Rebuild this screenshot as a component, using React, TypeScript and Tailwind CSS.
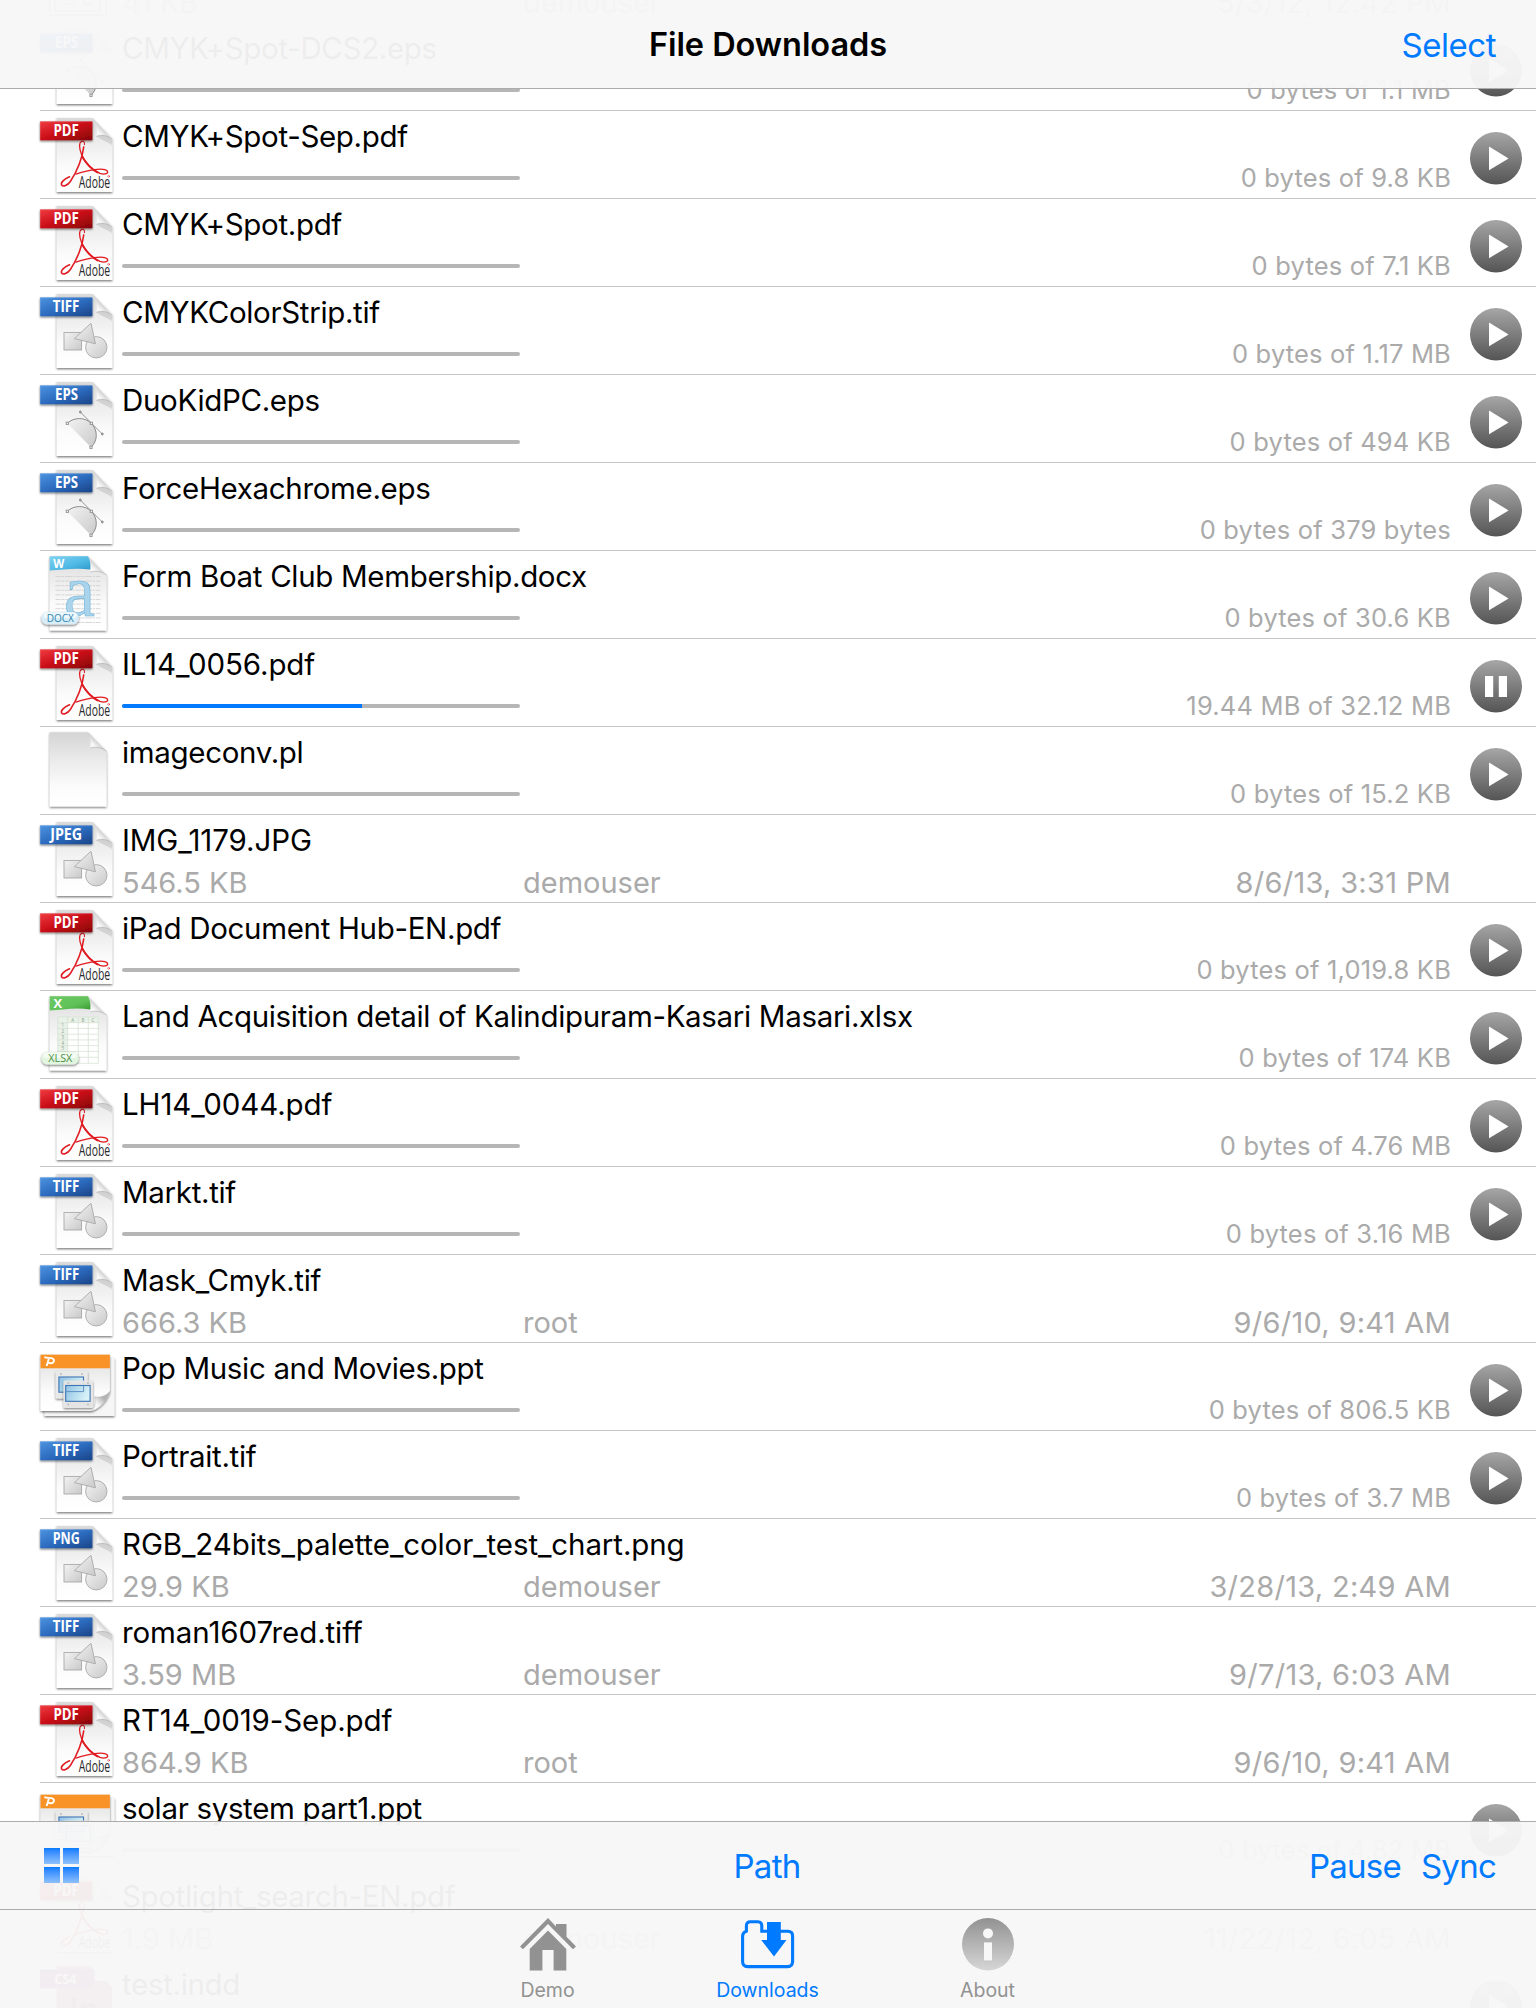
import type { ReactNode } from "react";

type Kind = "pdf" | "tiff" | "eps" | "jpeg" | "png" | "docx" | "xlsx" | "ppt" | "blank" | "indd" | "frame";

type FileRow = {
  name: string;
  kind: Kind;
  size?: string;
  owner?: string;
  date?: string;
  status?: string;
  progress?: number;
};

const files: FileRow[] = [
  { name: "CMYK+Spot-DCS.pict", kind: "frame", size: "41 KB", owner: "demouser", date: "5/3/12, 12:42 PM" },
  { name: "CMYK+Spot-DCS2.eps", kind: "eps", status: "0 bytes of 1.1 MB" },
  { name: "CMYK+Spot-Sep.pdf", kind: "pdf", status: "0 bytes of 9.8 KB" },
  { name: "CMYK+Spot.pdf", kind: "pdf", status: "0 bytes of 7.1 KB" },
  { name: "CMYKColorStrip.tif", kind: "tiff", status: "0 bytes of 1.17 MB" },
  { name: "DuoKidPC.eps", kind: "eps", status: "0 bytes of 494 KB" },
  { name: "ForceHexachrome.eps", kind: "eps", status: "0 bytes of 379 bytes" },
  { name: "Form Boat Club Membership.docx", kind: "docx", status: "0 bytes of 30.6 KB" },
  { name: "IL14_0056.pdf", kind: "pdf", status: "19.44 MB of 32.12 MB", progress: 60.3 },
  { name: "imageconv.pl", kind: "blank", status: "0 bytes of 15.2 KB" },
  { name: "IMG_1179.JPG", kind: "jpeg", size: "546.5 KB", owner: "demouser", date: "8/6/13, 3:31 PM" },
  { name: "iPad Document Hub-EN.pdf", kind: "pdf", status: "0 bytes of 1,019.8 KB" },
  { name: "Land Acquisition detail of Kalindipuram-Kasari Masari.xlsx", kind: "xlsx", status: "0 bytes of 174 KB" },
  { name: "LH14_0044.pdf", kind: "pdf", status: "0 bytes of 4.76 MB" },
  { name: "Markt.tif", kind: "tiff", status: "0 bytes of 3.16 MB" },
  { name: "Mask_Cmyk.tif", kind: "tiff", size: "666.3 KB", owner: "root", date: "9/6/10, 9:41 AM" },
  { name: "Pop Music and Movies.ppt", kind: "ppt", status: "0 bytes of 806.5 KB" },
  { name: "Portrait.tif", kind: "tiff", status: "0 bytes of 3.7 MB" },
  { name: "RGB_24bits_palette_color_test_chart.png", kind: "png", size: "29.9 KB", owner: "demouser", date: "3/28/13, 2:49 AM" },
  { name: "roman1607red.tiff", kind: "tiff", size: "3.59 MB", owner: "demouser", date: "9/7/13, 6:03 AM" },
  { name: "RT14_0019-Sep.pdf", kind: "pdf", size: "864.9 KB", owner: "root", date: "9/6/10, 9:41 AM" },
  { name: "solar system part1.ppt", kind: "ppt", status: "0 bytes of 4.82 MB" },
  { name: "Spotlight_search-EN.pdf", kind: "pdf", size: "1.9 MB", owner: "demouser", date: "11/22/12, 6:05 AM" },
  { name: "test.indd", kind: "indd", status: "0 bytes of 2.3 MB" },
];

// gradients shared by every icon, mounted once
function IconDefs() {
  return (
    <svg className="absolute h-0 w-0" aria-hidden="true">
      <defs>
        <linearGradient id="paper" x1="0" y1="0" x2="0" y2="1">
          <stop offset="0" stopColor="#d9d9d9" />
          <stop offset=".25" stopColor="#e9e9e9" />
          <stop offset=".65" stopColor="#fbfbfb" />
          <stop offset="1" stopColor="#fff" />
        </linearGradient>
        <linearGradient id="blank" x1="0" y1="0" x2="0" y2="1">
          <stop offset="0" stopColor="#d4d4d4" />
          <stop offset=".4" stopColor="#ececec" />
          <stop offset=".75" stopColor="#fcfcfc" />
          <stop offset="1" stopColor="#fff" />
        </linearGradient>
        <linearGradient id="fold" x1="0.1" y1="0.95" x2="0.65" y2="0.35">
          <stop offset="0" stopColor="#fff" />
          <stop offset=".45" stopColor="#f6f6f6" />
          <stop offset="1" stopColor="#b4b4b4" />
        </linearGradient>
        <linearGradient id="blue" x1="0" y1="0" x2="1" y2="1">
          <stop offset="0" stopColor="#4c93e0" />
          <stop offset=".5" stopColor="#2d6cc0" />
          <stop offset="1" stopColor="#1a4488" />
        </linearGradient>
        <linearGradient id="red" x1="0" y1="0" x2="1" y2="1">
          <stop offset="0" stopColor="#f03c40" />
          <stop offset=".5" stopColor="#c90d17" />
          <stop offset="1" stopColor="#850408" />
        </linearGradient>
        <linearGradient id="shape" x1="0" y1="0" x2="1" y2="1">
          <stop offset="0" stopColor="#f3f3f3" />
          <stop offset="1" stopColor="#c9c9c9" />
        </linearGradient>
        <linearGradient id="wordTop" x1="0" y1="0" x2="1" y2="1">
          <stop offset="0" stopColor="#7fd3f2" />
          <stop offset=".6" stopColor="#4db8e4" />
          <stop offset="1" stopColor="#2b96c8" />
        </linearGradient>
        <linearGradient id="excelTop" x1="0" y1="0" x2="1" y2="1">
          <stop offset="0" stopColor="#6cc964" />
          <stop offset=".6" stopColor="#5fc257" />
          <stop offset="1" stopColor="#37962f" />
        </linearGradient>
        <linearGradient id="slide" x1="0" y1="0" x2="1" y2="0.3">
          <stop offset="0" stopColor="#8fc0e4" />
          <stop offset=".5" stopColor="#b5dcee" />
          <stop offset="1" stopColor="#d8f1f8" />
        </linearGradient>
        <linearGradient id="button" x1="0" y1="0" x2="0" y2="1">
          <stop offset="0" stopColor="#a6a6a6" />
          <stop offset="1" stopColor="#555" />
        </linearGradient>
        <linearGradient id="info" x1="0" y1="0" x2="0" y2="1">
          <stop offset="0" stopColor="#929292" />
          <stop offset="1" stopColor="#d6d6d6" />
        </linearGradient>
        <filter id="shadow" x="-20%" y="-20%" width="140%" height="140%">
          <feDropShadow dx="0" dy="1.2" stdDeviation="0.9" floodColor="#000" floodOpacity=".55" />
        </filter>
      </defs>
    </svg>
  );
}

function Label({ x, y, size, width, fill, bold, children }: { x: number; y: number; size: number; width: number; fill: string; bold?: boolean; children: string }) {
  return (
    <text x={x} y={y} fontSize={size} fill={fill} fontWeight={bold ? 700 : 400} textLength={width} lengthAdjust="spacingAndGlyphs" className="font-['Open_Sans',sans-serif]">
      {children}
    </text>
  );
}

function Banner({ color, x, width, children }: { color: string; x: number; width: number; children: string }) {
  return (
    <>
      <rect x="0" y="10.3" width="52.4" height="18.9" fill={color} filter="url(#shadow)" />
      <path d="M.4 29V10.7H52" fill="none" stroke="#fff" strokeOpacity=".2" strokeWidth=".8" />
      <Label x={x} y={25.4} size={15.6} width={width} fill="#fff" bold>
        {children}
      </Label>
    </>
  );
}

function Sheet({ children }: { children?: ReactNode }) {
  return (
    <>
      <path d="M16.7 7H52.5L72.3 27.5V81H16.7Z" fill="url(#paper)" filter="url(#shadow)" />
      {children}
      <path d="M52.5 7C56 11 57.5 17 56.4 25.2C62 23.5 68 24.5 72.3 28.5Z" fill="url(#fold)" />
      <path d="M56.4 25.2C62 23.5 68 24.5 72.3 28.5" fill="none" stroke="#8f8f8f" strokeOpacity=".6" strokeWidth=".8" />
      <path d="M56.4 25.6L72 34V29C68 25 62 24 56.4 25.6Z" fill="#000" fillOpacity=".1" />
    </>
  );
}

function OfficeSheet({ fill = "url(#paper)", children }: { fill?: string; children?: ReactNode }) {
  return (
    <>
      <path d="M9.7 5.3H48L66.5 24V79.5H9.7Z" fill={fill} filter="url(#shadow)" />
      {children}
      <path d="M47.5 5.3C50.5 9 51.3 14 50.3 21C56 19.3 62 20.3 66.6 24.4Z" fill="url(#fold)" />
      <path d="M50.3 21C56 19.3 62 20.3 66.6 24.4" fill="none" stroke="#8f8f8f" strokeOpacity=".55" strokeWidth=".8" />
    </>
  );
}

function Shapes() {
  return (
    <g fill="url(#shape)" stroke="#a9a9a9" strokeWidth=".9">
      <rect x="24" y="45.4" width="17.6" height="17.6" />
      <circle cx="56.3" cy="60.3" r="10.7" />
      <path d="M51 36.2L34.4 51.6L55.5 56.8Z" />
    </g>
  );
}

function Curve() {
  return (
    <g stroke="#8c8c8c" strokeWidth=".9">
      <path d="M27.3 48.3C34 42 45 42 51.3 48.3C58 55 58 66 51 72.3Z" fill="url(#shape)" stroke="none" />
      <path d="M27.3 48.3C34 42 45 42 51.3 48.3C58 55 58 66 51 72.3" fill="none" strokeWidth="1" />
      <path d="M40.3 37L62.3 59" />
      <g fill="#fff">
        <rect x="26.2" y="47.2" width="2.2" height="2.2" />
        <rect x="50.2" y="47.2" width="2.2" height="2.2" />
        <rect x="49.9" y="71.2" width="2.2" height="2.2" />
        <circle cx="40.3" cy="37" r="1" fill="#999" />
        <circle cx="62.3" cy="59" r="1" fill="#999" />
      </g>
    </g>
  );
}

function Acrobat() {
  return (
    <g fill="none" stroke="#e01b22" strokeLinecap="round">
      <path d="M41.6 30.5C38.8 31.6 39 37 41.6 43.5C44.3 50.5 51.5 59 60 62.3C65 64 69 62.4 67.3 60C64.6 57 54 58.4 45.5 60.3C42 61.1 39 62 36 63.2" strokeWidth="1.3" />
      <path d="M44.4 33.6C45 30.5 43 29.6 41.6 30.5" strokeWidth="1.1" />
      <path d="M43.7 36C42.6 46 37.5 60 30.5 70.2C27.5 74.6 23 76.3 21.6 73.9C20.5 71.6 24 68.2 29.5 65.8" strokeWidth="1.6" />
      <path d="M42.3 46C46 52 50 57.5 57.5 61.5" strokeWidth="1.9" />
      <circle cx="68.6" cy="65.3" r=".9" strokeWidth=".5" />
    </g>
  );
}

function Badge({ color, edge, x, width, children }: { color: string; edge: string; x: number; width: number; children: string }) {
  return (
    <>
      <rect x="1.4" y="61" width="37.4" height="12.6" rx="6.3" fill={edge} filter="url(#shadow)" />
      <rect x="3.4" y="61.6" width="33.4" height="5.5" rx="2.7" fill="#fff" fillOpacity=".6" />
      <Label x={x} y={71} size={11} width={width} fill={color}>
        {children}
      </Label>
    </>
  );
}

function Docx() {
  return (
    <OfficeSheet>
      <path d="M9.7 5.3H48C50.5 9 51.2 14 50.5 18.5C36 16.5 22 18.7 9.7 19.6Z" fill="url(#wordTop)" />
      <Label x={13.3} y={17} size={12} width={11} fill="#fff" bold>
        W
      </Label>
      {Array.from({ length: 11 }, (_, i) => (
        <path key={i} d={`M15.5 ${25.5 + i * 4.6}H60.5`} stroke="#d3d3d3" strokeWidth=".9" strokeDasharray="5 .8 3 .8 7 .8 2 .8" />
      ))}
      <text x="24" y="65.2" fontSize="74" textLength="31" lengthAdjust="spacingAndGlyphs" fill="#a9d4ec" stroke="#6fb1d6" strokeWidth=".6" className="font-['Liberation_Serif',serif]">
        a
      </text>
      <Badge color="#2f86ae" edge="#d8edf7" x={6.7} width={27.2}>
        DOCX
      </Badge>
    </OfficeSheet>
  );
}

function Xlsx() {
  return (
    <OfficeSheet>
      <path d="M9.7 5.3H48C50.5 9 51.2 14 50.5 18.5C36 15.8 22 18.7 9.7 19.6Z" fill="url(#excelTop)" />
      <Label x={13.6} y={17} size={12} width={8.6} fill="#fff" bold>
        X
      </Label>
      <rect x="17.7" y="25.8" width="40.6" height="46.5" fill="#fff" />
      <path d="M17.7 25.8H58.3V31.7H27.7V72.3H17.7Z" fill="#e9f1e8" />
      <path d="M17.7 25.8H58.3V72.3H17.7ZM27.7 25.8V72.3M38.2 25.8V72.3M48.3 25.8V72.3M17.7 31.7H58.3M17.7 37.4H58.3M17.7 43.2H58.3M17.7 48.9H58.3M17.7 54.6H58.3M17.7 60.4H58.3M17.7 66.3H58.3" fill="none" stroke="#d3e0d1" strokeWidth=".7" />
      <g fontSize="4.6" fill="#8fa58d" className="font-['Open_Sans',sans-serif]">
        <text x="31.3" y="30.6">A</text>
        <text x="41.6" y="30.6">B</text>
        <text x="51.4" y="30.6">C</text>
        {[1, 2, 3, 4, 5].map((n) => (
          <text key={n} x="21.4" y={30.6 + n * 5.75}>
            {n}
          </text>
        ))}
      </g>
      <Badge color="#4b8f45" edge="#e2f5df" x={8.3} width={24}>
        XLSX
      </Badge>
    </OfficeSheet>
  );
}

function Ppt() {
  return (
    <>
      <path d="M4.5 15H74.5V73H4.5Z" fill="#f6f6f6" filter="url(#shadow)" />
      <path d="M.5 11.7H69.8V49C67 58 60 65 51.7 68H.5Z" fill="url(#paper)" filter="url(#shadow)" />
      <rect x=".5" y="11.7" width="69.4" height="13.6" fill="#f99327" />
      <path d="M4.4 14.2C6.5 15.2 9.5 14.6 11.6 15.2C15.2 16.2 14.6 20.4 10.4 20.2C8.8 20.2 8 19.6 7.2 19M8.8 16L6.6 23" fill="none" stroke="#fff" strokeWidth="1.9" />
      <g filter="url(#shadow)">
        <rect x="15.7" y="28" width="32" height="27.6" rx="1.5" fill="#e9e9e9" />
      </g>
      <rect x="18.9" y="34" width="24.6" height="15.2" fill="url(#slide)" stroke="#3f74b5" strokeWidth="1.1" />
      <g filter="url(#shadow)">
        <rect x="23.5" y="37.6" width="29.5" height="27.4" rx="1.5" fill="#e9e9e9" fillOpacity=".88" />
      </g>
      <rect x="25.7" y="42.5" width="24.4" height="15.8" fill="url(#slide)" stroke="#3f74b5" strokeWidth="1.1" />
      <path d="M25.7 48.6H43.6V42.5" fill="none" stroke="#5d92c6" strokeWidth="1" />
      <g fill="#bdbdbd">
        <circle cx="21" cy="31" r="1" />
        <circle cx="42" cy="31" r="1" />
        <circle cx="28.3" cy="40" r="1" />
        <circle cx="48" cy="40" r="1" />
        <circle cx="28.3" cy="61.6" r="1" />
        <circle cx="48" cy="61.6" r="1" />
      </g>
      <path d="M69.8 48.5C66 53 60 55 54.5 53.8C56 59.5 55 64.5 51.7 68C60 65.5 67 58.5 69.8 48.5Z" fill="url(#fold)" stroke="#a9a9a9" strokeWidth=".5" />
    </>
  );
}

const banners: Partial<Record<Kind, [string, number, number, string]>> = {
  pdf: ["url(#red)", 13.4, 25.4, "PDF"],
  tiff: ["url(#blue)", 12.8, 26.6, "TIFF"],
  eps: ["url(#blue)", 15, 23, "EPS"],
  jpeg: ["url(#blue)", 10.2, 32, "JPEG"],
  png: ["url(#blue)", 12.7, 27, "PNG"],
};

function FileIcon({ kind }: { kind: Kind }) {
  const banner = banners[kind];
  return (
    <svg width="82" height="87" viewBox="0 0 82 87" className="shrink-0 overflow-visible">
      {banner && (
        <>
          <Sheet>
            {kind === "pdf" && (
              <>
                <Acrobat />
                <Label x={38.8} y={77.2} size={15.4} width={31.4} fill="#2b2b2b">
                  Adobe
                </Label>
              </>
            )}
            {kind === "eps" && <Curve />}
            {(kind === "tiff" || kind === "jpeg" || kind === "png") && <Shapes />}
          </Sheet>
          <Banner color={banner[0]} x={banner[1]} width={banner[2]}>
            {banner[3]}
          </Banner>
        </>
      )}
      {kind === "docx" && <Docx />}
      {kind === "xlsx" && <Xlsx />}
      {kind === "ppt" && <Ppt />}
      {kind === "blank" && <OfficeSheet fill="url(#blank)" />}
      {kind === "frame" && (
        <g fill="none" stroke="#777" strokeWidth="1">
          <rect x="9.5" y="20" width="56.5" height="60" />
          <rect x="15" y="26" width="45" height="50" />
          <path d="M22 69H34V60M44 60V69H52" />
        </g>
      )}
      {kind === "indd" && (
        <>
          <path d="M16.7 7H50L55 12V22H66L72 28V88H16.7Z" fill="#b0406e" />
          <rect x="0" y="10.5" width="53" height="19" fill="#8a1246" />
          <Label x={14.5} y={25} size={14.6} width={22} fill="#fff" bold>
            CS4
          </Label>
          <Label x={29} y={62} size={32} width={29} fill="#6a0b35" bold>
            In
          </Label>
        </>
      )}
    </svg>
  );
}

function TransferButton({ paused }: { paused: boolean }) {
  return (
    <svg width="52" height="53" viewBox="0 0 52 53" className="mt-[21px]">
      <ellipse cx="26" cy="26.2" rx="26" ry="26.2" fill="url(#button)" />
      {paused ? <path d="M19 14.6V38.2L38.6 26.4Z" fill="#fff" /> : <path d="M15 16h8.2v21H15zM28.8 16H37v21h-8.2z" fill="#fff" />}
    </svg>
  );
}

function Row({ file }: { file: FileRow }) {
  // digit runs set too tight at the regular tracking
  const tracking = /\d\d/.test(file.name) ? "tracking-[-0.1px]" : "tracking-[-0.33px]";
  return (
    <li className="ml-10 flex h-[88px] border-b border-[#c6c6c6]">
      <FileIcon kind={file.kind} />
      <div className="w-[1329px] shrink-0 pt-[7px]">
        <p className={`h-9 text-[29.5px] leading-9 whitespace-nowrap ${tracking}`}>{file.name}</p>
        {file.status ? (
          <div className="mt-[6px] flex h-9 items-center justify-between">
            <div className="h-1 w-[398px] overflow-hidden rounded-full bg-[#b6b6b6]">
              <div className="h-1 bg-[#007aff]" style={{ width: `${file.progress ?? 0}%` }} />
            </div>
            <span className="text-[25.5px] leading-9 tracking-[0.18px] text-[#aaa]">{file.status}</span>
          </div>
        ) : (
          <div className="mt-[6px] flex h-9 text-[29px] leading-[37px] text-[#aaa]">
            <span className="w-[401px]">{file.size}</span>
            <span>{file.owner}</span>
            <span className="ml-auto tracking-[0.28px]">{file.date}</span>
          </div>
        )}
      </div>
      <div className="flex w-[85px] items-start justify-center pl-[5px]">{file.status && <TransferButton paused={!file.progress} />}</div>
    </li>
  );
}

function Tab({ label, active, children }: { label: string; active?: boolean; children: ReactNode }) {
  return (
    <button className={`flex w-[220px] flex-col items-center pt-2 text-[19.5px] leading-6 ${active ? "text-[#007aff]" : "text-[#929292]"}`}>
      {children}
      <span className="mt-[7px]">{label}</span>
    </button>
  );
}

export default function App() {
  return (
    <div className="relative h-[2008px] w-[1536px] overflow-hidden bg-white font-['Inter',sans-serif] text-black">
      <IconDefs />
      <ul className="-mt-[65px]">
        {files.map((file) => (
          <Row key={file.name} file={file} />
        ))}
      </ul>

      <header className="absolute inset-x-0 top-0 grid h-[89px] grid-cols-3 border-b border-[#acacac] bg-[#f7f7f7]/96 px-10 text-[33px] leading-[88px]">
        <h1 className="col-start-2 pt-px text-center text-[32.5px] font-semibold tracking-[-0.05px]">File Downloads</h1>
        <button className="justify-self-end tracking-[-0.45px] text-[#007aff]">Select</button>
      </header>

      <footer className="absolute inset-x-0 bottom-0">
        <div className="grid h-[88px] grid-cols-3 items-center border-t border-[#acacac] bg-[#f7f7f7]/96 px-10 text-[33px] tracking-[-0.75px] text-[#007aff]">
          <div className="ml-1 grid w-[35px] grid-cols-2 gap-[3px]">
            {[0, 1, 2, 3].map((n) => (
              <span key={n} className="h-4 bg-linear-to-b from-[#007aff] to-[#8dc0fb]" />
            ))}
          </div>
          <button className="justify-self-center pt-0.5 pr-0.5">Path</button>
          <div className="flex gap-5 justify-self-end pt-0.5">
            <button>Pause</button>
            <button>Sync</button>
          </div>
        </div>
        <nav className="flex h-[99px] justify-center border-t border-[#acacac] bg-[#f7f7f7]/96 pr-px">
          <Tab label="Demo">
            <svg width="56" height="53" viewBox="0 0 56 53" fill="#929292">
              <path d="M28 0L0 28.6L3 31.2L28 6L53 31.2L56 28.6L46.5 18.8V6H36V8.4Z" />
              <path d="M28 12.4L9.7 31V52.5H22.4V32H33.6V52.5H46.3V31Z" />
            </svg>
          </Tab>
          <Tab label="Downloads" active>
            <svg width="54" height="53" viewBox="0 0 54 53">
              <path d="M26 13.2H20.8V8C20.8 5.2 19.4 3.8 17 3.8H9.5C6.8 3.8 5.4 5.2 5.4 8V13.2C2.8 14 1.6 15.4 1.6 18.4V43.5C1.6 46.9 3.2 48.6 6.6 48.6H46.6C50 48.6 51.6 46.9 51.6 43.5V18C51.6 14.8 50 13.2 46.6 13.2H39" fill="none" stroke="#007aff" strokeWidth="3.1" />
              <path d="M26 4H39.8V22H45.5L33 38.5L20.2 22H26Z" fill="#007aff" />
            </svg>
          </Tab>
          <Tab label="About">
            <svg width="52" height="53" viewBox="0 0 52 53">
              <ellipse cx="26" cy="26.3" rx="26" ry="26.3" fill="url(#info)" />
              <circle cx="26" cy="15.4" r="5" fill="#f7f7f7" />
              <rect x="22" y="24.4" width="8" height="18" fill="#f7f7f7" />
            </svg>
          </Tab>
        </nav>
      </footer>
    </div>
  );
}
